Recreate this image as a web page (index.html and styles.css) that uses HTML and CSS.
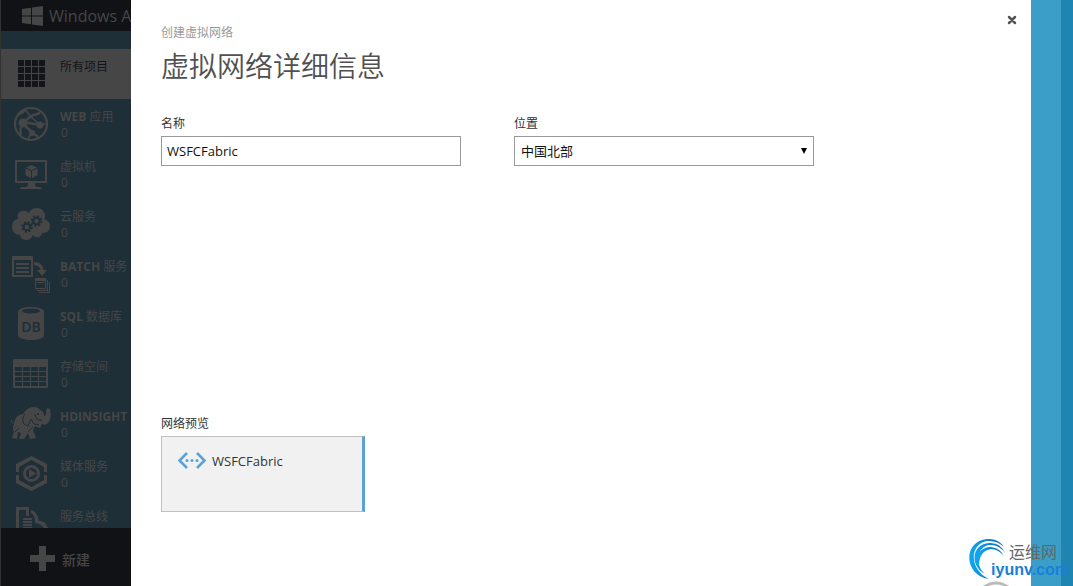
FILE: index.html
```html
<!DOCTYPE html>
<html lang="zh-CN">
<head>
    <meta charset="UTF-8">
    <meta name="viewport" content="width=device-width, initial-scale=1.0">
    <title>创建虚拟网络</title>
    <link rel="stylesheet" href="styles.css">
</head>
<body>
    <aside class="sidebar">
        <div class="brand">
            <svg class="brand-logo" viewBox="0 0 21 20" aria-hidden="true">
                <path d="M0 3L9 1.7V9.4H0zM10 1.5L21 0V9.4H10zM0 10.5H9V18.2L0 17zM10 10.5H21V20L10 18.4z"/>
            </svg>
            <span>Windows A</span>
        </div>

        <nav class="nav">
            <a href="#" class="nav-item active">
                <svg class="nav-icon" viewBox="0 0 40 40" aria-hidden="true">
                    <path d="M7 6h6v6H7zm7 0h6v6h-6zm7 0h6v6h-6zm7 0h6v6h-6zM7 13h6v6H7zm7 0h6v6h-6zm7 0h6v6h-6zm7 0h6v6h-6zM7 20h6v6H7zm7 0h6v6h-6zm7 0h6v6h-6zm7 0h6v6h-6zM7 27h6v6H7zm7 0h6v6h-6zm7 0h6v6h-6zm7 0h6v6h-6z"/>
                </svg>
                <span class="nav-text"><span>所有项目</span></span>
            </a>
            <a href="#" class="nav-item">
                <svg class="nav-icon" viewBox="0 0 40 40" aria-hidden="true">
                    <circle cx="20" cy="20" r="16" fill="none" stroke="currentColor" stroke-width="2.2"/>
                    <path d="M12 19L20 12L29 9M12 18L29 21M12 20L21 28L27 33M12 19Q8 25 10 31" fill="none" stroke="currentColor" stroke-width="2.4"/>
                    <path d="M14 5L19 12L29 21L35 20M21 28L17 35" fill="none" stroke="currentColor" stroke-width="1.6"/>
                    <circle cx="12" cy="19" r="4.500"/>
                    <circle cx="29" cy="21" r="3.500"/>
                    <circle cx="21" cy="29" r="3"/>
                    <path d="M5 13Q8 5 16 4L13 9Q8 11 5 15z"/>
                </svg>
                <span class="nav-text"><span><b>WEB</b> 应用</span><span class="count">0</span></span>
            </a>
            <a href="#" class="nav-item">
                <svg class="nav-icon" viewBox="0 0 40 40" aria-hidden="true">
                    <path fill-rule="evenodd" d="M5 6h30q1 0 1 1v21q0 1-1 1H5q-1 0-1-1V7q0-1 1-1zm1 2v19h28V8z"/>
                    <path d="M17 29h7v3l2 1h2q3 0 3 2H9q0-2 3-2h3l2-1z"/>
                    <path d="M20.500 11l5.500 2.500l-5.500 2.700L15 13.500zM14.500 14.400l5.500 2.700v6.900l-5.500-2.700zM26.500 14.400L21 17.100V24l5.500-2.700z"/>
                </svg>
                <span class="nav-text"><span>虚拟机</span><span class="count">0</span></span>
            </a>
            <a href="#" class="nav-item">
                <svg class="nav-icon" viewBox="0 0 40 40" aria-hidden="true">
                    <path d="M7 15Q5 8 11 7Q15 6 18 9Q20 4 26 4Q33 4 34 12Q34 14 33 15Q39 17 39 22Q39 28 33 29H31Q30 34 25 33Q23 33 22 31Q20 36 15 36Q10 36 9 31Q1 30 1 23Q1 16 7 15z"/>
                    <g class="cutout">
                        <circle cx="16" cy="23" r="3.200" stroke-width="2"/>
                        <circle cx="16" cy="23" r="4.800" stroke-width="2" stroke-dasharray="2 1.770"/>
                        <circle cx="25.500" cy="17" r="3.200" stroke-width="2"/>
                        <circle cx="25.500" cy="17" r="4.800" stroke-width="2" stroke-dasharray="2 1.770"/>
                    </g>
                </svg>
                <span class="nav-text"><span>云服务</span><span class="count">0</span></span>
            </a>
            <a href="#" class="nav-item">
                <svg class="nav-icon" viewBox="0 0 40 40" aria-hidden="true">
                    <path fill-rule="evenodd" d="M2 2h19q1 0 1 1v19q0 1-1 1H2q-1 0-1-1V3q0-1 1-1zm1 4v15h17V6z"/>
                    <path d="M5 9h13v2H5zM5 13h13v2H5zM5 17h13v2H5z"/>
                    <path d="M23 8q9 0 9.500 8H36l-5 6l-5-6h3.500q0-4-6.500-5z"/>
                    <path fill-rule="evenodd" d="M24 24h11v11H24zm1 3v7h9v-7zM26 28h7v1h-7zM36 26h1v11H26v-1h10zM38 28h1v11H28v-1h10z"/>
                </svg>
                <span class="nav-text"><span><b>BATCH</b> 服务</span><span class="count">0</span></span>
            </a>
            <a href="#" class="nav-item">
                <svg class="nav-icon" viewBox="0 0 40 40" aria-hidden="true">
                    <path d="M7 8C7 1.300 33 1.300 33 8V31C33 37.700 7 37.700 7 31z"/>
                    <ellipse class="hole" cx="20" cy="7" rx="9" ry="2.500"/>
                    <text class="db-text" x="20" y="28" text-anchor="middle">DB</text>
                </svg>
                <span class="nav-text"><span><b>SQL</b> 数据库</span><span class="count">0</span></span>
            </a>
            <a href="#" class="nav-item">
                <svg class="nav-icon" viewBox="0 0 40 40" aria-hidden="true">
                    <path fill-rule="evenodd" d="M3 5h33q1 0 1 1v27q0 1-1 1H3q-1 0-1-1V6q0-1 1-1zM4 13v4h7v-4zm8 0v4h7v-4zm8 0v4h7v-4zm8 0v4h7v-4zM4 18v4h7v-4zm8 0v4h7v-4zm8 0v4h7v-4zm8 0v4h7v-4zM4 23v4h7v-4zm8 0v4h7v-4zm8 0v4h7v-4zm8 0v4h7v-4zM4 28v4h7v-4zm8 0v4h7v-4zm8 0v4h7v-4zm8 0v4h7v-4z"/>
                </svg>
                <span class="nav-text"><span>存储空间</span><span class="count">0</span></span>
            </a>
            <a href="#" class="nav-item">
                <svg class="nav-icon" viewBox="0 0 40 40" aria-hidden="true">
                    <path d="M1 14L0 18Q1 20 3 19Q4 11 12 10Q16 3 23 3Q27 3 29 6Q33 7 33 12Q35 12 35 8L36 4L39 5Q41 15 37 19Q35 22 31 20L29 24L24 22L22 26L25 34L19 35L17 29L13 35H8L10 29L7 28L6 35L1 34L3 28Q1 23 3 20L1 18z"/>
                    <path class="cutout" d="M14 10Q10 15 13 20L17 22L20 15L23 20L28 21M24 10Q24 14 27 16L31 16M4 28L8 24M17 28L22 23" stroke-width="1"/>
                    <circle class="hole" cx="27" cy="10" r="1"/>
                </svg>
                <span class="nav-text"><b>HDINSIGHT</b><span class="count">0</span></span>
            </a>
            <a href="#" class="nav-item">
                <svg class="nav-icon" viewBox="0 0 40 40" aria-hidden="true">
                    <path d="M5 18V10L20.500 2L36 10V18H33V13L20.500 6L8 13V18zM5 21V29L20.500 37L36 29V21H33V26L20.500 33L8 26V21z"/>
                    <circle cx="20.500" cy="19.500" r="7" fill="none" stroke="currentColor" stroke-width="3"/>
                    <path d="M18 15L25 19.500L18 24z"/>
                </svg>
                <span class="nav-text"><span>媒体服务</span><span class="count">0</span></span>
            </a>
            <a href="#" class="nav-item">
                <svg class="nav-icon" viewBox="0 0 40 40" aria-hidden="true">
                    <path d="M5 3H18V12H15V6H8V34H5z"/>
                    <path d="M12 14h9v2h-9zM12 17h9v2h-9zM12 20h9v2h-9zM12 23h9v2h-9z"/>
                    <path d="M20 6Q26 7 28 17Q34 16 37 24H33Q31 21 28 20Q25 20 24 18Q24 11 20 9z"/>
                </svg>
                <span class="nav-text"><span>服务总线</span></span>
            </a>
        </nav>

        <button type="button" class="btn-new">
            <svg class="plus-icon" viewBox="0 0 25 25" aria-hidden="true">
                <path d="M9 0h7v9h9v7h-9v9H9v-9H0V9h9z"/>
            </svg>
            <span>新建</span>
        </button>
    </aside>

    <main class="dialog">
        <button type="button" class="btn-close" aria-label="关闭">
            <svg viewBox="0 0 10 10" aria-hidden="true">
                <path d="M2 2L8 8M8 2L2 8"/>
            </svg>
        </button>

        <p class="subtitle">创建虚拟网络</p>
        <h1>虚拟网络详细信息</h1>

        <form class="form">
            <div class="form-group">
                <label for="name">名称</label>
                <input type="text" id="name" value="WSFCFabric">
            </div>
            <div class="form-group">
                <label for="location">位置</label>
                <div class="select-wrap">
                    <select id="location">
                        <option>中国北部</option>
                    </select>
                </div>
            </div>
        </form>

        <section class="preview">
            <h2>网络预览</h2>
            <div class="preview-card">
                <svg class="network-icon" viewBox="0 0 28 18" aria-hidden="true">
                    <path d="M9 1L1.500 8.500L9 16M19 1L26.500 8.500L19 16"/>
                    <circle cx="9" cy="8.500" r="1.500"/>
                    <circle cx="14" cy="8.500" r="1.500"/>
                    <circle cx="19" cy="8.500" r="1.500"/>
                </svg>
                <span>WSFCFabric</span>
            </div>
        </section>
    </main>

    <div class="strip"></div>
    <div class="strip-dark"></div>

    <!-- site badge over the lower right corner -->
    <div class="badge">
        <svg class="badge-logo" viewBox="0 0 42 48" aria-hidden="true">
            <defs>
                <linearGradient id="swirl" x1="0" y1="0" x2="1" y2="0">
                    <stop offset="0" stop-color="#10a8f0"/>
                    <stop offset="1" stop-color="#0868b8"/>
                </linearGradient>
            </defs>
            <path fill="url(#swirl)" d="M20 41C-6 37-6 3 18 1Q29 0 35 9Q28 2 18 3C0 6 0 32 20 41z"/>
            <path fill="url(#swirl)" d="M16 36C0 27 3 6 20 5Q31 4 36 15Q30 6 20 7C8 9 5 26 16 36z"/>
            <path fill="url(#swirl)" d="M10 28C5 17 12 9 22 9Q31 10 35 18Q29 11 22 11Q10 13 10 28z"/>
            <path class="badge-ring" d="M15 49Q27 41 39 49"/>
        </svg>
        <div class="badge-text">
            <span class="badge-name">运维网</span>
            <span class="badge-site">iyunv.com</span>
        </div>
    </div>
</body>
</html>
```

FILE: styles.css
```css
:root {
    --side-bg: #1e2f38;
    --side-dark: #111216;
    --side-text: #464646;
    --accent: #59a2d9;
}

* {
    box-sizing: border-box;
}

body {
    display: flex;
    height: 100vh;
    margin: 0;
    overflow: hidden;
    background-color: white;
    color: #333;
    font-family: "Open Sans", "Noto Sans CJK SC", sans-serif;
    font-size: 12px;
    line-height: 16px;
}

button, input, select {
    font-family: inherit;
}

svg {
    flex: none;
    fill: currentColor;
}

/* Sidebar */
.sidebar {
    display: flex;
    flex-direction: column;
    flex: none;
    width: 131px;
    overflow: hidden;
    border-left: 1px solid #333;
    background-color: var(--side-bg);
    color: var(--side-text);
}

.brand {
    display: flex;
    align-items: center;
    flex: none;
    gap: 6px;
    height: 31px;
    padding-left: 21px;
    background-color: var(--side-dark);
    font-size: 16px;
    white-space: nowrap;
}

.brand-logo {
    width: 21px;
    height: 20px;
}

.nav {
    flex: 1;
    min-height: 0;
    padding-top: 18px;
    overflow: hidden;
}

.nav-item {
    display: flex;
    gap: 9px;
    height: 50px;
    padding-left: 10px;
    color: inherit;
    text-decoration: none;
    white-space: nowrap;
}

.nav-item.active {
    background-color: #464646;
    color: #14151a;
}

.nav-icon {
    width: 40px;
    height: 40px;
    margin-top: 5px;
}

.nav-text {
    display: flex;
    flex-direction: column;
    padding-top: 10px;
}

.nav-text b {
    font-weight: 700;
}

.count {
    padding-left: 1px;
}

.cutout {
    fill: none;
    stroke: var(--side-bg);
}

.hole {
    fill: var(--side-bg);
}

.db-text {
    fill: var(--side-bg);
    font-size: 14px;
    font-weight: 600;
}

.btn-new {
    display: flex;
    align-items: center;
    flex: none;
    gap: 7px;
    height: 58px;
    padding: 3px 0 0 29px;
    border: none;
    background-color: var(--side-dark);
    color: var(--side-text);
    font-size: 14px;
    font-weight: 500;
}

.plus-icon {
    width: 25px;
    height: 25px;
}

/* Dialog */
.dialog {
    position: relative;
    flex: 1;
    padding: 25px 30px;
}

.btn-close {
    position: absolute;
    top: 11px;
    right: 10px;
    width: 18px;
    height: 18px;
    padding: 4px;
    border: none;
    background: none;
}

.btn-close svg {
    display: block;
    fill: none;
    stroke: #555;
    stroke-width: 2.5;
    stroke-linecap: round;
}

.subtitle {
    margin: 0;
    color: #999;
}

h1 {
    margin: 7px 0 32px;
    color: #505050;
    font-size: 28px;
    font-weight: 350;
    line-height: 36px;
}

.form {
    display: flex;
    gap: 53px;
}

.form-group {
    flex: 0 1 300px;
}

label {
    display: block;
    margin-bottom: 4px;
}

input, select {
    display: block;
    width: 100%;
    height: 30px;
    padding: 0 5px;
    border: 1px solid #999;
    border-radius: 0;
    background-color: white;
    color: #111;
    font-size: 13px;
}

select {
    padding: 0 6px;
    appearance: none;
}

.select-wrap {
    position: relative;
}

.select-wrap::after {
    content: "";
    position: absolute;
    top: 12px;
    right: 7px;
    border: 3px solid transparent;
    border-top: 6px solid black;
    border-bottom: none;
    pointer-events: none;
}

.preview {
    margin-top: 250px;
}

h2 {
    margin: 0 0 4px;
    font-size: 12px;
    font-weight: 400;
}

.preview-card {
    display: flex;
    align-items: flex-start;
    gap: 6px;
    width: 204px;
    height: 76px;
    padding: 15px 16px;
    border: 1px solid #c0c0c0;
    border-right: 3px solid var(--accent);
    background-color: #f1f1f1;
    font-size: 13px;
    line-height: 18px;
}

.network-icon {
    width: 28px;
    height: 18px;
    color: var(--accent);
}

.network-icon path {
    fill: none;
    stroke: currentColor;
    stroke-width: 2.6;
}

/* Right edge */
.strip {
    flex: none;
    width: 30px;
    background-color: #3a9ec9;
}

.strip-dark {
    flex: none;
    width: 12px;
    background-color: #2084b0;
}

.badge {
    position: absolute;
    right: 4px;
    bottom: 0;
    display: flex;
    height: 48px;
}

.badge-logo {
    width: 42px;
    height: 48px;
}

.badge-ring {
    fill: none;
    stroke: #bbb;
    stroke-width: 3;
}

.badge-text {
    display: flex;
    flex-direction: column;
    align-items: flex-end;
    margin-left: -20px;
    padding-top: 5px;
}

.badge-name {
    padding-right: 12px;
    color: #666;
    font-size: 16px;
    line-height: 18px;
}

.badge-site {
    color: #1880d8;
    font-family: "Liberation Sans", sans-serif;
    font-size: 16px;
    font-weight: 700;
    line-height: 18px;
}
```
